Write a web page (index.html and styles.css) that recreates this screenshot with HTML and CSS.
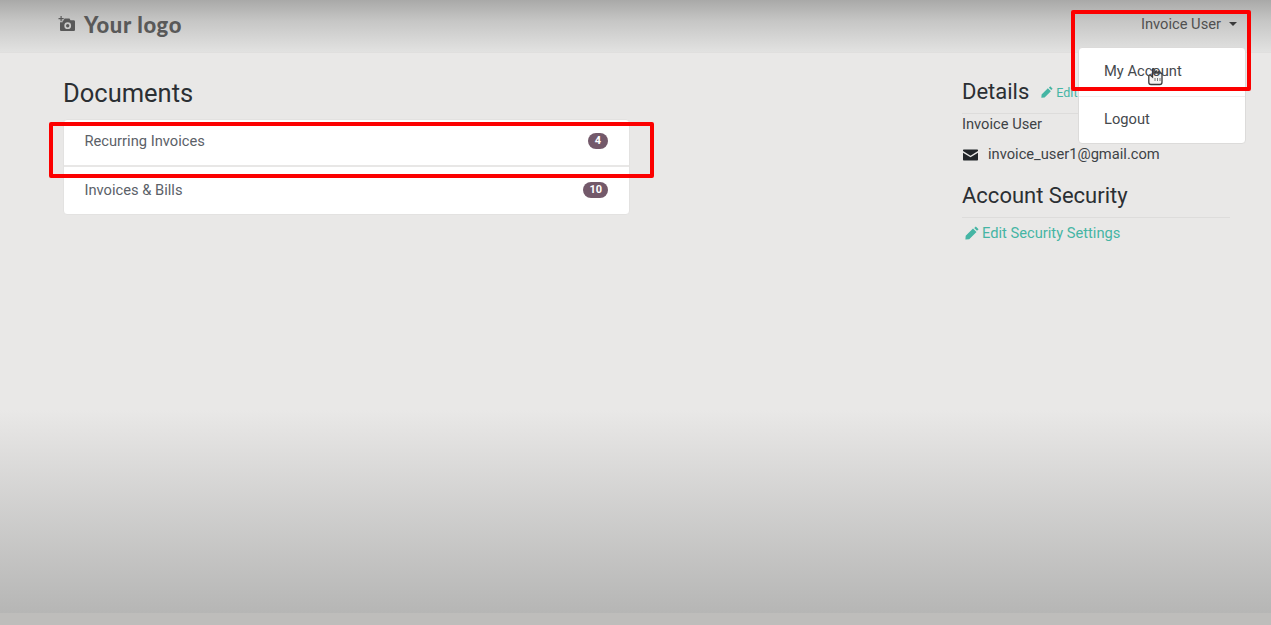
FILE: index.html
```html
<!DOCTYPE html>
<html>
<head>
    <title>My Account</title>
    <link rel="stylesheet" href="styles.css">
</head>
<body>
    <header class="topbar">
        <a class="logo">
            <svg class="logo-icon" viewBox="0 0 18 16" width="18" height="16">
                <path d="M2.5 0v2H.5v1.2h2v2h1.2v-2h2V2h-2V0z" fill="#595959"/>
                <path fill-rule="evenodd" fill="#595959" d="M6.5 2.5h5l1 1.7h3.2c.7 0 1.3.6 1.3 1.3v8.2c0 .7-.6 1.3-1.3 1.3H3.3c-.7 0-1.3-.6-1.3-1.3V6.2h2.6V4.6h1zM9.7 6.3a3.4 3.4 0 1 0 0 6.8 3.4 3.4 0 0 0 0-6.8zm0 1.7a1.7 1.7 0 1 1 0 3.4 1.7 1.7 0 0 1 0-3.4z"/>
            </svg>
            <span class="logo-text">Your logo</span>
        </a>
        <div class="user-toggle">Invoice User<span class="caret"></span></div>
    </header>

    <main class="content">
        <section class="documents">
            <h3 class="docs-title">Documents</h3>
            <div class="list-card">
                <div class="list-row">
                    <span>Recurring Invoices</span>
                    <span class="badge">4</span>
                </div>
                <div class="list-row">
                    <span>Invoices &amp; Bills</span>
                    <span class="badge">10</span>
                </div>
            </div>
        </section>
        <aside class="details">
            <div class="side-head">
                <h4 class="side-title">Details</h4>
                <a class="edit-link edit-small">
                    <svg class="pencil" viewBox="0 0 14 14" width="12" height="12"><path d="M10.8.4l2.8 2.8-1.6 1.6-2.8-2.800zM8 2.500l3.500 3.500-7.300 7.300L.4 13.600l.3-3.800z" fill="#45b5a4"/></svg>Edit
                </a>
            </div>
            <div class="info-name">Invoice User</div>
            <div class="info-mail">
                <svg class="mail" viewBox="0 0 15 11" width="15" height="12">
                    <path d="M1 0h13c.6 0 1 .4 1 1v.6L7.500 6.200 0 1.600V1c0-.6.4-1 1-1z" fill="#212529"/>
                    <path d="M0 3.200l7.500 4.600L15 3.200V10c0 .6-.4 1-1 1H1c-.6 0-1-.4-1-1z" fill="#212529"/>
                </svg>
                invoice_user1@gmail.com
            </div>
            <h4 class="side-title security-title">Account Security</h4>
            <a class="edit-link security-link">
                <svg class="pencil" viewBox="0 0 14 14" width="14" height="14"><path d="M10.8.4l2.8 2.8-1.6 1.6-2.8-2.800zM8 2.500l3.500 3.500-7.300 7.300L.4 13.600l.3-3.800z" fill="#45b5a4"/></svg>Edit Security Settings
            </a>
        </aside>
    </main>

    <div class="dropdown">
        <div class="dropdown-item">
            <svg class="cursor" viewBox="0 0 18 18" width="18" height="18">
                <path d="M5.500 1.500c0-1 1.600-1 1.600 0V5h1.500V3.500c0-.8 1.400-.8 1.400 0V5h1.500V4c0-.8 1.400-.8 1.400 0v1h.8c.8 0 1.300.5 1.300 1.300v8c0 1.300-.9 2.200-2.200 2.200H4c-1.300 0-2.200-.9-2.200-2.200V8c0-.9 1.100-1.400 1.700-.8l2 1.800z" fill="#f4f3f1" stroke="#3a3a3a" stroke-width="1.300"/>
                <path d="M8 10v3M10.500 10v3M13 10v3" stroke="#777" stroke-width="1"/>
            </svg>
            <span class="item-label">My Account</span>
        </div>
        <div class="dropdown-item">
            <span class="item-label">Logout</span>
        </div>
    </div>

    <div class="mark mark-user"></div>
    <div class="mark mark-row"></div>
    <div class="bottom-shade"></div>
    <div class="bottom-strip"></div>
</body>
</html>
```

FILE: styles.css
```css
* {
    box-sizing: border-box;
}
body {
    margin: 0;
    height: 625px;
    overflow: hidden;
    position: relative;
    background-color: #e9e8e7;
    font-family: Roboto, "Liberation Sans", sans-serif;
    font-size: 14.7px;
    color: #212529;
}
.topbar {
    height: 53px;
    display: flex;
    align-items: center;
    justify-content: space-between;
    padding: 0 34px 4px 58px;
    background: linear-gradient(#a9a9a8, #c6c6c5 40%, #e2e2e1);
    border-bottom: 1px solid #e0dfde;
}
.logo {
    display: flex;
    align-items: center;
    gap: 8px;
}
.logo-text {
    font-family: Lato, sans-serif;
    font-size: 22px;
    font-weight: 900;
    letter-spacing: 0.6px;
    color: #595959;
}
.user-toggle {
    display: flex;
    align-items: center;
    color: #505050;
}
.caret {
    margin-left: 8px;
    border-top: 4px solid #3a3a3a;
    border-left: 4px solid transparent;
    border-right: 4px solid transparent;
}
.content {
    display: flex;
    justify-content: space-between;
    padding: 0 41px 0 63px;
}
.documents {
    width: 567px;
    padding-top: 25px;
}
.docs-title {
    margin: 0 0 10px;
    font-size: 25.500px;
    font-weight: 400;
    line-height: 31px;
    color: #2b2f33;
}
.list-card {
    background-color: #fff;
    border-radius: 4px;
    border: 1px solid #e3e2e1;
}
.list-row {
    height: 49px;
    padding: 0 21px 2px 20.5px;
    display: flex;
    align-items: center;
    justify-content: space-between;
    color: #5b6168;
}
.list-row:first-child {
    height: 45px;
    padding-bottom: 3px;
}
.list-row + .list-row {
    border-top: 2px solid #e8e7e6;
}
.badge {
    min-width: 20px;
    padding: 2px 6px;
    border-radius: 10px;
    background-color: #73596a;
    color: #fff;
    font-size: 11px;
    font-weight: 700;
    line-height: 12px;
    text-align: center;
}
.details {
    width: 268px;
    padding-top: 25px;
}
.side-head {
    display: flex;
    align-items: center;
    gap: 12px;
    padding-bottom: 7px;
    border-bottom: 1px solid #dddcdb;
}
.side-title {
    margin: 0;
    font-size: 22px;
    font-weight: 400;
    line-height: 28px;
    color: #2b2f33;
}
.edit-link {
    color: #45b5a4;
}
.edit-small {
    font-size: 12.500px;
}
.pencil {
    margin-right: 3px;
    vertical-align: -1px;
}
.info-name {
    margin-top: 2px;
    line-height: 17px;
    color: #3d4246;
}
.info-mail {
    margin-top: 13px;
    padding-left: 1px;
    line-height: 17px;
    display: flex;
    align-items: center;
    gap: 10px;
    color: #3d4246;
}
.security-title {
    margin-top: 19px;
    padding-bottom: 7px;
    border-bottom: 1px solid #dddcdb;
}
.security-link {
    display: block;
    margin-top: 6px;
    padding-left: 3px;
    line-height: 18px;
}
.security-link .pencil {
    margin-right: 3px;
    vertical-align: -2px;
}

/* things lying over the page */
.dropdown {
    position: absolute;
    left: 1078px;
    top: 47px;
    width: 168px;
    height: 97px;
    background-color: #fff;
    border: 1px solid #dcdbda;
    border-radius: 4px;
}
.dropdown-item {
    height: 48px;
    padding: 15px 25px 0;
    color: #45494d;
    line-height: 17px;
}
.dropdown-item + .dropdown-item {
    padding-top: 14px;
    border-top: 1px solid #eeeeee;
}
.item-label {
    position: relative;
}
.cursor {
    position: absolute;
    left: 68px;
    top: 20px;
}
.mark {
    position: absolute;
    border: 4px solid #fc0000;
    border-radius: 2px;
}
.mark-user {
    left: 1071px;
    top: 10px;
    width: 180px;
    height: 81px;
}
.mark-row {
    left: 49px;
    top: 122px;
    width: 605px;
    height: 56px;
}
.bottom-shade {
    position: absolute;
    left: 0;
    right: 0;
    top: 410px;
    height: 203px;
    background: linear-gradient(rgba(180, 180, 179, 0), #b6b6b5);
    pointer-events: none;
}
.bottom-strip {
    position: absolute;
    left: 0;
    right: 0;
    top: 613px;
    height: 12px;
    background-color: #bebdbb;
}
```
